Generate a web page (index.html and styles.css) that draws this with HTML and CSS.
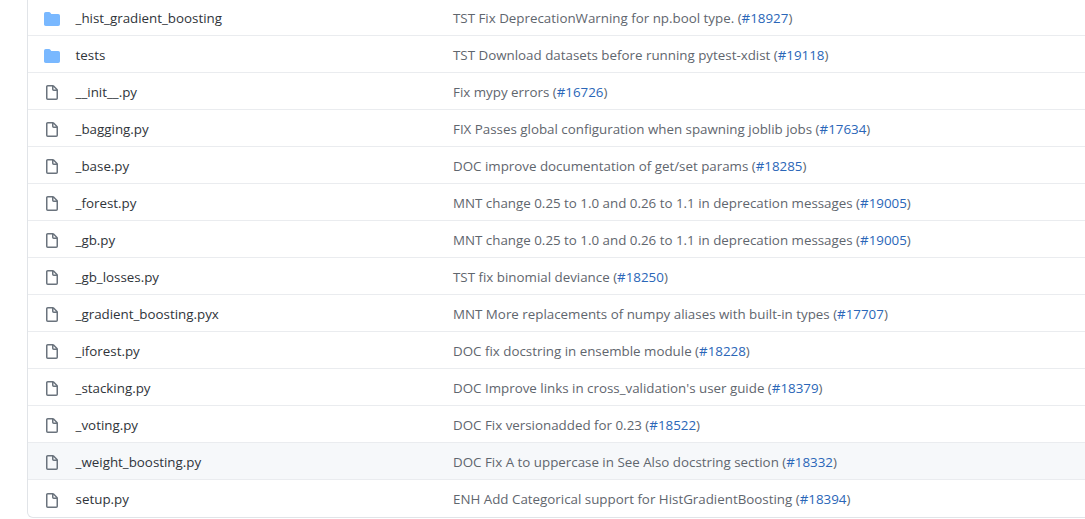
FILE: index.html
```html
<!DOCTYPE html>
<html lang="en">
<head>
<meta charset="utf-8">
<title>sklearn/ensemble</title>
<link rel="stylesheet" href="styles.css">
</head>
<body>
<svg class="defs" width="0" height="0" aria-hidden="true">
  <symbol id="folder" viewBox="0 0 16 16"><path d="M1.75 1A1.75 1.75 0 000 2.75v10.5C0 14.216.784 15 1.75 15h12.5A1.75 1.75 0 0016 13.25v-8.5A1.75 1.75 0 0014.25 3H7.5a.25.25 0 01-.2-.1l-.9-1.2C6.07 1.26 5.55 1 5 1H1.75z"/></symbol>
  <symbol id="file" viewBox="0 0 16 16"><path fill-rule="evenodd" d="M3.75 1.5a.25.25 0 00-.25.25v11.5c0 .138.112.25.25.25h8.5a.25.25 0 00.25-.25V6H9.75A1.75 1.75 0 018 4.25V1.5H3.75zm5.75.56v2.19c0 .138.112.25.25.25h2.19L9.5 2.06zM2 1.75C2 .784 2.784 0 3.75 0h5.086c.464 0 .909.184 1.237.513l3.414 3.414c.329.328.513.773.513 1.237v8.086A1.75 1.75 0 0112.25 15h-8.5A1.75 1.75 0 012 13.25V1.75z"/></symbol>
</svg>
<main class="files">
  <div class="row"><svg class="icon folder"><use href="#folder"/></svg><span class="name">_hist_gradient_boosting</span><span class="msg">TST Fix DeprecationWarning for np.bool type. (<a href="#">#18927</a>)</span></div>
  <div class="row"><svg class="icon folder"><use href="#folder"/></svg><span class="name">tests</span><span class="msg">TST Download datasets before running pytest-xdist (<a href="#">#19118</a>)</span></div>
  <div class="row"><svg class="icon"><use href="#file"/></svg><span class="name">__init__.py</span><span class="msg">Fix mypy errors (<a href="#">#16726</a>)</span></div>
  <div class="row"><svg class="icon"><use href="#file"/></svg><span class="name">_bagging.py</span><span class="msg">FIX Passes global configuration when spawning joblib jobs (<a href="#">#17634</a>)</span></div>
  <div class="row"><svg class="icon"><use href="#file"/></svg><span class="name">_base.py</span><span class="msg">DOC improve documentation of get/set params (<a href="#">#18285</a>)</span></div>
  <div class="row"><svg class="icon"><use href="#file"/></svg><span class="name">_forest.py</span><span class="msg">MNT change 0.25 to 1.0 and 0.26 to 1.1 in deprecation messages (<a href="#">#19005</a>)</span></div>
  <div class="row"><svg class="icon"><use href="#file"/></svg><span class="name">_gb.py</span><span class="msg">MNT change 0.25 to 1.0 and 0.26 to 1.1 in deprecation messages (<a href="#">#19005</a>)</span></div>
  <div class="row"><svg class="icon"><use href="#file"/></svg><span class="name">_gb_losses.py</span><span class="msg">TST fix binomial deviance (<a href="#">#18250</a>)</span></div>
  <div class="row"><svg class="icon"><use href="#file"/></svg><span class="name">_gradient_boosting.pyx</span><span class="msg">MNT More replacements of numpy aliases with built-in types (<a href="#">#17707</a>)</span></div>
  <div class="row"><svg class="icon"><use href="#file"/></svg><span class="name">_iforest.py</span><span class="msg">DOC fix docstring in ensemble module (<a href="#">#18228</a>)</span></div>
  <div class="row"><svg class="icon"><use href="#file"/></svg><span class="name">_stacking.py</span><span class="msg">DOC Improve links in cross_validation's user guide (<a href="#">#18379</a>)</span></div>
  <div class="row"><svg class="icon"><use href="#file"/></svg><span class="name">_voting.py</span><span class="msg">DOC Fix versionadded for 0.23 (<a href="#">#18522</a>)</span></div>
  <div class="row hover"><svg class="icon"><use href="#file"/></svg><span class="name">_weight_boosting.py</span><span class="msg">DOC Fix A to uppercase in See Also docstring section (<a href="#">#18332</a>)</span></div>
  <div class="row"><svg class="icon"><use href="#file"/></svg><span class="name">setup.py</span><span class="msg">ENH Add Categorical support for HistGradientBoosting (<a href="#">#18394</a>)</span></div>
</main>
</body>
</html>
```
FILE: styles.css
```css
html, body {
  margin: 0;
  height: 519px;
  overflow: hidden;
  background: #fff;
}
body {
  font-family: "Open Sans", "Noto Sans", "Liberation Sans", sans-serif;
  font-size: 13.35px;
}
.defs { display: block; height: 0; }
.files {
  margin: -1px -10px 0 27px;
  border: 1px solid #e1e4e8;
  border-top: 0;
  border-radius: 0 0 6px 6px;
}
.row {
  display: grid;
  grid-template-columns: 16px 393px 1fr;
  align-items: center;
  height: 36px;
  padding-left: 16px;
  border-bottom: 1px solid #eaecef;
}
.row:last-child {
  height: 37px;
  border-bottom: 0;
}
.row.hover { background: #f6f8fa; }
.icon {
  width: 16px;
  height: 16px;
  margin-top: 4px;
  fill: #6a737d;
}
.icon.folder { fill: #79b8ff; }
.name {
  padding: 1px 0 0 15.6px;
  color: #2f343a;
}
.msg {
  padding-top: 1px;
  color: #5f666e;
}
.msg a { color: #2a66b8; text-decoration: none; }
```
